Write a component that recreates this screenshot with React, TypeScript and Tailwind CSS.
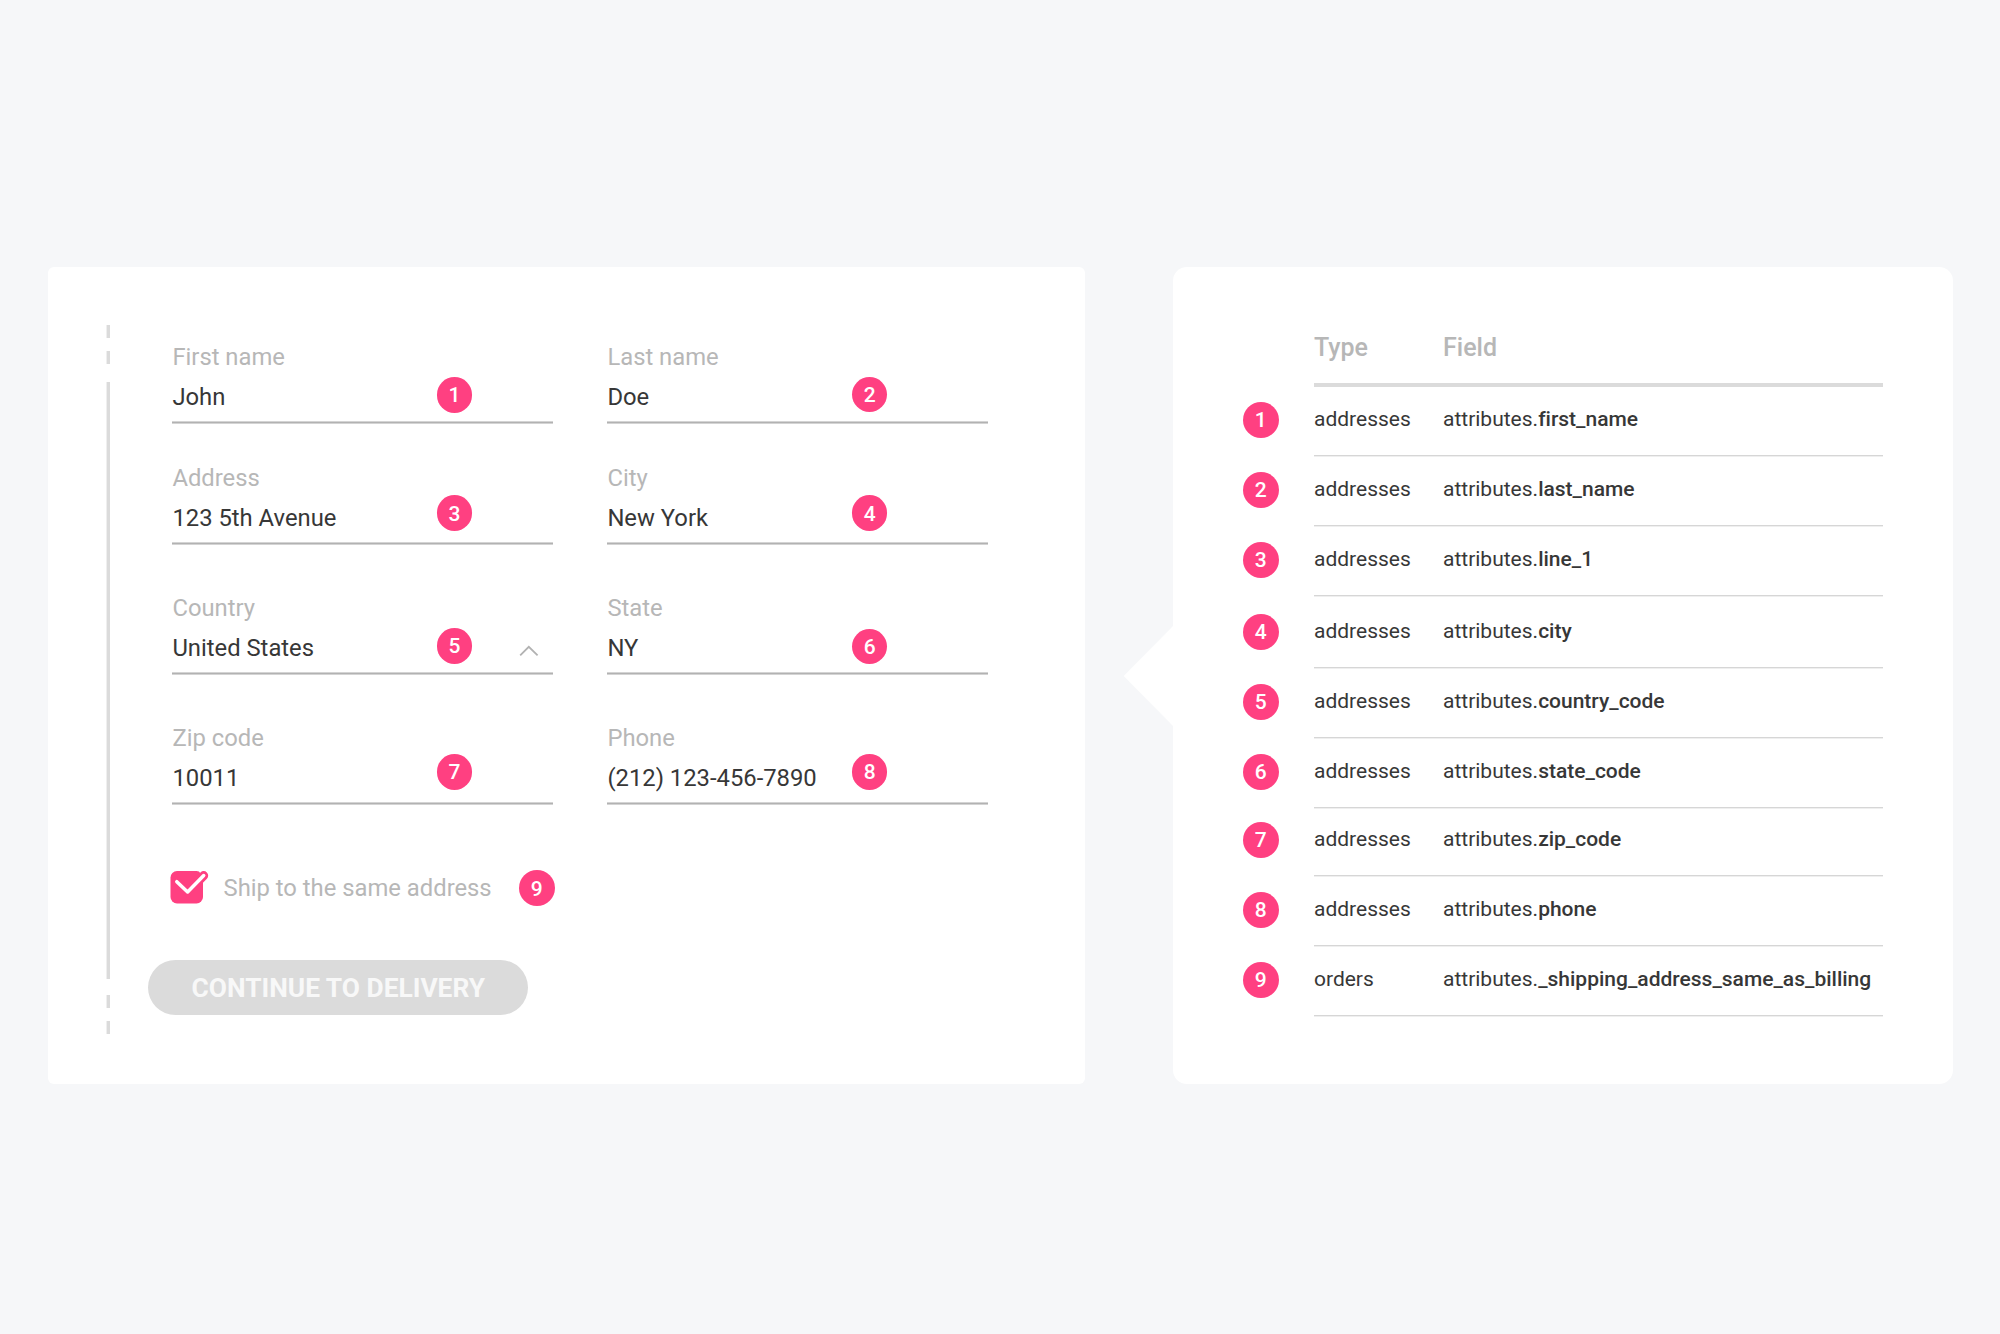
import React from "react";

type Field = {
  id: number;
  label: string;
  value: string;
  badge: string;
  select?: boolean;
};

const rows: { spacing: string; fields: Field[] }[] = [
  {
    spacing: "",
    fields: [
      { id: 1, label: "First name", value: "John", badge: "left-[264.6px] top-[34px]" },
      { id: 2, label: "Last name", value: "Doe", badge: "left-[244.9px] top-[33.7px]" },
    ],
  },
  {
    spacing: "mt-10",
    fields: [
      { id: 3, label: "Address", value: "123 5th Avenue", badge: "left-[264.6px] top-[31.4px]" },
      { id: 4, label: "City", value: "New York", badge: "left-[244.9px] top-[31.4px]" },
    ],
  },
  {
    spacing: "mt-[49px]",
    fields: [
      { id: 5, label: "Country", value: "United States", badge: "left-[264.6px] top-[34.2px]", select: true },
      { id: 6, label: "State", value: "NY", badge: "left-[244.9px] top-[34.6px]" },
    ],
  },
  {
    spacing: "mt-[49px]",
    fields: [
      { id: 7, label: "Zip code", value: "10011", badge: "left-[264.6px] top-[30.2px]" },
      { id: 8, label: "Phone", value: "(212) 123-456-7890", badge: "left-[244.9px] top-[30px]" },
    ],
  },
];

const attributes = [
  { type: "addresses", field: "first_name", height: "h-[70px]" },
  { type: "addresses", field: "last_name", height: "h-[70px]" },
  { type: "addresses", field: "line_1", height: "h-[70px]" },
  { type: "addresses", field: "city", height: "h-[72px]" },
  { type: "addresses", field: "country_code", height: "h-[70px]" },
  { type: "addresses", field: "state_code", height: "h-[70px]" },
  { type: "addresses", field: "zip_code", height: "h-[68px]" },
  { type: "addresses", field: "phone", height: "h-[70px]" },
  { type: "orders", field: "_shipping_address_same_as_billing", height: "h-[70px]" },
];

function Badge({ n }: { n: number }) {
  return (
    <span className="flex size-[35.6px] shrink-0 items-center justify-center rounded-full bg-[#ff4081] pt-px text-[21px] leading-6 font-medium text-white">
      {n}
    </span>
  );
}

function FormField({ field }: { field: Field }) {
  return (
    <div className="relative w-[381px]">
      <div className="pl-[0.4px] text-[23.8px] leading-7 text-[#b7b7b7]">{field.label}</div>
      <div className="mt-3 pl-[0.4px] text-[23.8px] leading-7 text-[#373737]">{field.value}</div>
      <div className="mt-2.5 h-[3px] border-y border-[#d4d4d4] bg-[#b2b2b2]" />
      <div className={`absolute ${field.badge}`}>
        <Badge n={field.id} />
      </div>
      {field.select && (
        <svg className="absolute top-[51px] right-[14px] h-3 w-5" viewBox="0 0 20 12" fill="none" stroke="#b2b2b2" strokeWidth="1.8">
          <path d="M1.2 10.4 9.8 1.8 18.6 10.4" />
        </svg>
      )}
    </div>
  );
}

function Rail() {
  return (
    <div className="flex w-1 flex-col">
      <div className="h-[13px] border-l border-[#efefef] bg-[#dbdbdb]" />
      <div className="mt-[13px] h-[13px] border-l border-[#efefef] bg-[#dbdbdb]" />
      <div className="mt-[18px] h-[597px] border-l border-[#efefef] bg-[#dbdbdb]" />
      <div className="mt-4 h-[13px] border-l border-[#efefef] bg-[#dbdbdb]" />
      <div className="mt-[13px] h-[13px] border-l border-[#efefef] bg-[#dbdbdb]" />
    </div>
  );
}

function AddressForm() {
  return (
    <section className="flex h-[817px] w-[1037px] rounded-md bg-white pt-[58px] pl-[58px]">
      <Rail />
      <div className="pt-[18px]">
        <div className="pl-[62px]">
          {rows.map((row) => (
            <div key={row.fields[0].id} className={`flex gap-[54px] ${row.spacing}`}>
              {row.fields.map((field) => (
                <FormField key={field.id} field={field} />
              ))}
            </div>
          ))}
        </div>
        <div className="mt-[65px] flex h-9 items-center pl-[60px]">
          <svg className="h-9 w-10" viewBox="0 0 40 36" fill="none" strokeLinecap="round">
            <rect x="0.5" y="1" width="32.5" height="32.4" rx="6.5" fill="#ff4081" />
            <path d="M29.5 1.8 33.7 5.6" stroke="#fff" strokeWidth="1" />
            <path d="M6.8 11.7 17.6 22 33.7 5.6" stroke="#ff4081" strokeWidth="9" />
            <path d="M6.8 11.7 17.6 22 33.7 5.6" stroke="#fff" strokeWidth="3.5" strokeLinejoin="round" />
          </svg>
          <span className="ml-[13.5px] w-[295.5px] text-[23.8px] leading-7 text-[#b7b7b7]">Ship to the same address</span>
          <Badge n={9} />
        </div>
        <button className="mt-[54px] ml-[38.4px] flex h-[55px] w-[379.8px] items-center justify-center rounded-full bg-[#dbdbdb] text-[26.35px] leading-8 font-bold text-[#f8f8f8]">
          CONTINUE TO DELIVERY
        </button>
      </div>
    </section>
  );
}

function AttributeTable() {
  return (
    <section className="relative h-[817px] w-[780px] rounded-[14px] bg-white pt-[63px] pl-[70px]">
      <svg className="absolute top-[358px] left-[-50px] h-[102px] w-[51px]" viewBox="0 0 51 102" fill="#fff">
        <path d="M51 0 0.6 51 51 102Z" />
      </svg>
      <div className="ml-[71px] flex h-[57px] w-[569px] border-b-4 border-[#dbdbdb] pt-0.5 text-[25px] leading-8 font-medium text-[#b7b7b7]">
        <div className="w-[129px]">Type</div>
        <div>Field</div>
      </div>
      {attributes.map((attr, i) => (
        <div key={attr.field} className={`flex items-end ${attr.height}`}>
          <div className="mb-[19.4px]">
            <Badge n={i + 1} />
          </div>
          <div className="ml-[35.4px] w-[569px]">
            <div className="flex pb-6 text-[21px] leading-6 text-[#373737]">
              <div className="w-[129px]">{attr.type}</div>
              <div>
                attributes.<span className="font-medium">{attr.field}</span>
              </div>
            </div>
            <div className="h-0.5 border-b border-[#efefef] bg-[#d6d6d6]" />
          </div>
        </div>
      ))}
    </section>
  );
}

export default function App() {
  return (
    <main className="flex h-[1334px] w-[2000px] items-start gap-[88px] bg-[#f6f7f9] pt-[267px] pl-12 font-[Roboto,sans-serif] [font-variant-ligatures:none]">
      <AddressForm />
      <AttributeTable />
    </main>
  );
}
